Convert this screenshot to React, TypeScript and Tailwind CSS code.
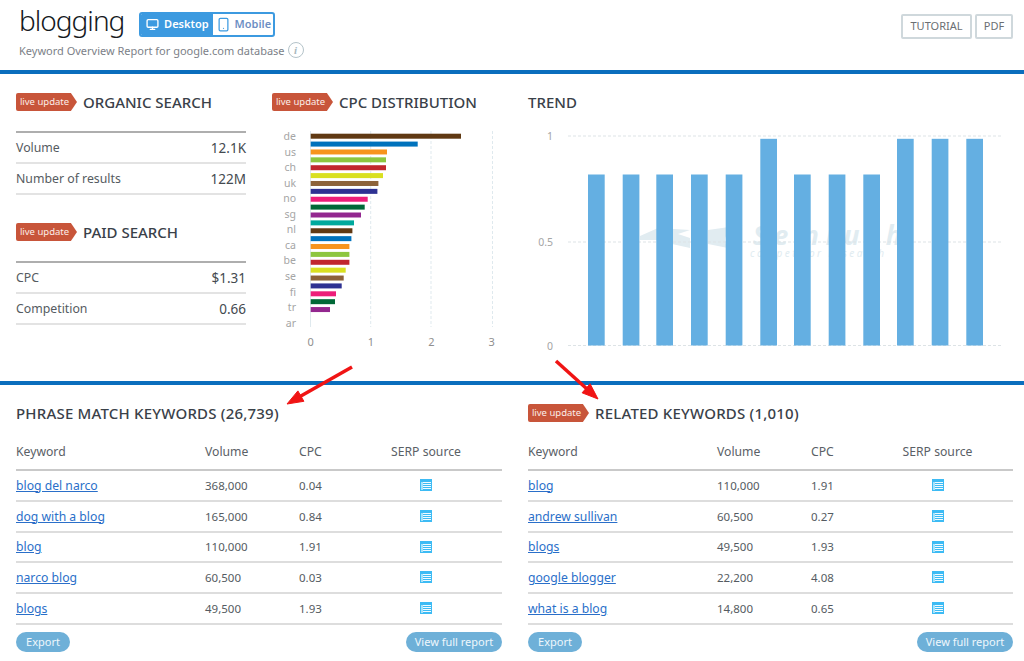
import React from 'react';
import { Monitor, Smartphone } from 'lucide-react';

const cpcBars = [
  [150.3, '#603913'], [107, '#0072bc'], [76.3, '#f7941d'], [75.3, '#8dc63f'],
  [75.3, '#c1272d'], [72.3, '#d9e021'], [67.7, '#8c6239'], [66.7, '#2e3192'],
  [57, '#ed1e79'], [54, '#006837'], [50.3, '#93278f'], [43.3, '#00a99d'],
  [41.7, '#603913'], [40.7, '#0072bc'], [38.7, '#f7941d'], [38.7, '#8dc63f'],
  [38.7, '#c1272d'], [35, '#d9e021'], [33, '#8c6239'], [31, '#2e3192'],
  [25.3, '#ed1e79'], [24.3, '#006837'], [19.3, '#93278f'],
] as const;

const countries = ['de', 'us', 'ch', 'uk', 'no', 'sg', 'nl', 'ca', 'be', 'se', 'fi', 'tr', 'ar'];

const trendBars = [
  [68, 171], [102.7, 171], [136.3, 171], [171, 171], [205.7, 171], [240.3, 206.7],
  [274, 171], [308.7, 171], [343.3, 171], [377, 206.7], [411.7, 206.7], [446.3, 206.7],
];

const phraseRows = [
  ['blog del narco', '368,000', '0.04'],
  ['dog with a blog', '165,000', '0.84'],
  ['blog', '110,000', '1.91'],
  ['narco blog', '60,500', '0.03'],
  ['blogs', '49,500', '1.93'],
];

const relatedRows = [
  ['blog', '110,000', '1.91'],
  ['andrew sullivan', '60,500', '0.27'],
  ['blogs', '49,500', '1.93'],
  ['google blogger', '22,200', '4.08'],
  ['what is a blog', '14,800', '0.65'],
];

const LiveBadge = () => (
  <span className="flex h-[18px] w-[61px] items-center justify-center rounded-[2px] bg-[#c8553a] pr-[4px] text-[9.5px] text-[#fbeee9] [clip-path:polygon(0_0,90%_0,100%_50%,90%_100%,0_100%)]">
    live update
  </span>
);

const Heading = ({ live, wide, children }: { live?: boolean; wide?: boolean; children: React.ReactNode }) => (
  <div className="flex h-[18px] items-center gap-[6px]">
    {live && <LiveBadge />}
    <h2 className={wide ? 'text-[15px] leading-none font-medium tracking-[0.2px] whitespace-nowrap text-[#3a4149]' : 'text-[15px] leading-none font-medium whitespace-nowrap text-[#3a4149]'}>{children}</h2>
  </div>
);

const Stat = ({ label, value }: { label: string; value: string }) => (
  <div className="flex h-[31px] items-center justify-between border-b-2 border-[#e3e3e3] pt-[2px] text-[12.3px] text-[#555b61]">
    <span>{label}</span>
    <span className="text-[13.5px] text-[#444a50]">{value}</span>
  </div>
);

const SerpIcon = () => (
  <svg width="12" height="12" viewBox="0 0 12 12" className="block">
    <rect width="12" height="12" fill="#3dbbf4" />
    <rect x="1" y="3" width="2" height="8" fill="#a5e2fb" />
    <rect x="3" y="3" width="8" height="1" fill="#f2fbff" />
    <rect x="3" y="5" width="8" height="1" fill="#f2fbff" />
    <rect x="3" y="7" width="8" height="1" fill="#f2fbff" />
    <rect x="3" y="9" width="8" height="1" fill="#f2fbff" />
  </svg>
);

const KeywordTable = ({ title, live, rows }: { title: string; live?: boolean; rows: string[][] }) => (
  <section>
    <Heading live={live} wide>{title}</Heading>
    <div className="mt-[10px] grid h-[39px] grid-cols-[189px_94px_51px_1fr] items-center border-b-2 border-[#c9c9c9] pt-[3px] text-[12.2px] text-[#5a6066]">
      <span>Keyword</span>
      <span>Volume</span>
      <span>CPC</span>
      <span className="text-center">SERP source</span>
    </div>
    {rows.map((row) => (
      <div key={row[0]} className="grid h-[30.8px] grid-cols-[189px_94px_51px_1fr] items-center border-b-2 border-[#dddddd] text-[11.5px] text-[#555b61]">
        <a className="pt-[1px] text-[12.2px] text-[#2a6fc9] underline">{row[0]}</a>
        <span>{row[1]}</span>
        <span>{row[2]}</span>
        <span className="flex justify-center self-start pt-[8px]"><SerpIcon /></span>
      </div>
    ))}
    <div className="mt-[7px] flex justify-between">
      <button className="h-[20px] w-[54px] rounded-full bg-[#6eb0d8] text-[11px] leading-none text-[#eef7fc]">Export</button>
      <button className="h-[20px] w-[96px] rounded-full bg-[#6eb0d8] text-[11px] leading-none text-[#eef7fc]">View full report</button>
    </div>
  </section>
);

const CpcChart = () => (
  <svg width="230" height="226" viewBox="272 126 230 226" className="mt-[15px] block">
    {[310.5, 370.7, 431, 492.5].map((x, i) => (
      <line key={x} x1={x} x2={x} y1="131" y2="327" stroke="#dfe9ee" strokeDasharray={i === 0 ? undefined : '3 2'} />
    ))}
    {cpcBars.map(([w, color], i) => (
      <rect key={i} x="310.7" y={133.7 + i * 7.88} width={w} height="5" fill={color} />
    ))}
    {countries.map((c, i) => (
      <text key={c} x="296" y={140 + i * 15.55} textAnchor="end" fontSize="10.5" fill="#a5a5a5">{c}</text>
    ))}
    {[0, 1, 2, 3].map((n) => (
      <text key={n} x={310.7 + n * 60.3} y="346" textAnchor="middle" fontSize="11" fill="#8f8f8f">{n}</text>
    ))}
  </svg>
);

const TrendChart = () => (
  <svg width="484" height="236" viewBox="0 0 484 236" className="mt-[9px] block">
    {/* faint watermark behind the bars */}
    <g fill="#e1ecf1">
      <path d="M112 116 L130 108 L162 110 L150 114 L162 118 L162 128 L144 124 L128 120 L112 120Z" />
      <path d="M180 110 L215 105 C198 108 192 122 202 128 L215 131 L180 124Z" />
      <text x="225" y="125" fontSize="26" fontWeight="700" fontStyle="italic" letterSpacing="7">Semrush</text>
      <text x="222" y="137" fontSize="10" fontStyle="italic" letterSpacing="2.5">competitor research</text>
    </g>
    <g stroke="#dde3e6" strokeDasharray="3 2">
      <line x1="40" x2="474" y1="16" y2="16" />
      <line x1="40" x2="474" y1="122" y2="122" />
      <line x1="40" x2="474" y1="225.5" y2="225.5" />
    </g>
    {trendBars.map(([x, h]) => (
      <rect key={x} x={x - 8} y={225.5 - h} width="16.7" height={h} fill="#64afe2" />
    ))}
    <text x="25" y="20" textAnchor="end" fontSize="10.5" fill="#a5a5a5">1</text>
    <text x="25" y="126" textAnchor="end" fontSize="10.5" fill="#a5a5a5">0.5</text>
    <text x="25" y="230" textAnchor="end" fontSize="10.5" fill="#a5a5a5">0</text>
  </svg>
);

export default function App() {
  return (
    <div className="relative h-[661px] w-[1024px] overflow-hidden bg-white font-['Noto_Sans','Open_Sans',sans-serif]">
      <header className="flex h-[74px] justify-between border-b-4 border-[#0a6ebd] pr-[11px] pl-[19px]">
        <div>
          <div className="flex h-[42px] items-end gap-[15px] pb-[5px]">
            <h1 className="mb-[3px] text-[28px] leading-none font-light tracking-[-1px] text-[#15191d]">blogging</h1>
            <div className="flex h-[25px] w-[136px] overflow-hidden rounded-[3px] border-2 border-[#3c9ae0] text-[11px] font-semibold">
              <span className="flex w-[72px] items-center justify-center gap-[5px] bg-[#3c9ae0] text-white">
                <Monitor size={13} strokeWidth={2.5} />
                Desktop
              </span>
              <span className="flex flex-1 items-center justify-center gap-[4px] text-[#6d8fc4]">
                <Smartphone size={15} strokeWidth={2} className="text-[#3c9ae0]" />
                Mobile
              </span>
            </div>
          </div>
          <div className="flex items-center gap-[3px] text-[11px] leading-none text-[#7c7f88]">
            Keyword Overview Report for google.com database
            <span className="flex h-[16px] w-[16px] items-center justify-center rounded-full border border-[#b4c3c9] font-['Liberation_Serif',serif] text-[11px] font-bold text-[#a9b8be] italic">i</span>
          </div>
        </div>
        <div className="flex gap-[3px] pt-[14px]">
          <button className="h-[25px] w-[71px] rounded-[2px] border-2 border-[#cfd8dc] text-[11px] text-[#6b6f73]">TUTORIAL</button>
          <button className="h-[25px] w-[38px] rounded-[2px] border-2 border-[#cfd8dc] text-[11px] text-[#6b6f73]">PDF</button>
        </div>
      </header>

      <main className="grid h-[307px] grid-cols-[230px_230px_484px] gap-x-[26px] px-[16px] pt-[19px]">
        <div>
          <Heading live>ORGANIC SEARCH</Heading>
          <div className="mt-[20px] border-t-2 border-[#aeaeae]">
            <Stat label="Volume" value="12.1K" />
            <Stat label="Number of results" value="122M" />
          </div>
          <div className="mt-[28px]">
            <Heading live>PAID SEARCH</Heading>
          </div>
          <div className="mt-[20px] border-t-2 border-[#aeaeae]">
            <Stat label="CPC" value="$1.31" />
            <Stat label="Competition" value="0.66" />
          </div>
        </div>
        <div>
          <Heading live>CPC DISTRIBUTION</Heading>
          <CpcChart />
        </div>
        <div>
          <Heading>TREND</Heading>
          <TrendChart />
        </div>
      </main>

      <div className="grid grid-cols-[486px_485px] gap-x-[26px] border-t-4 border-[#0a6ebd] px-[16px] pt-[19px]">
        <KeywordTable title="PHRASE MATCH KEYWORDS (26,739)" rows={phraseRows} />
        <KeywordTable title="RELATED KEYWORDS (1,010)" live rows={relatedRows} />
      </div>

      {/* red annotation arrows on top of the page */}
      <svg className="pointer-events-none absolute top-0 left-0" width="1024" height="661">
        <g stroke="#f01414" fill="#f01414">
          <line x1="352" y1="367" x2="300" y2="396.5" strokeWidth="3.5" />
          <path d="M287 404 L303.9 401.3 L297.9 390.9Z" strokeWidth="1" />
          <line x1="556" y1="361" x2="587" y2="389" strokeWidth="3.5" />
          <path d="M598 399 L590.1 383.8 L582.1 392.8Z" strokeWidth="1" />
        </g>
      </svg>
    </div>
  );
}
